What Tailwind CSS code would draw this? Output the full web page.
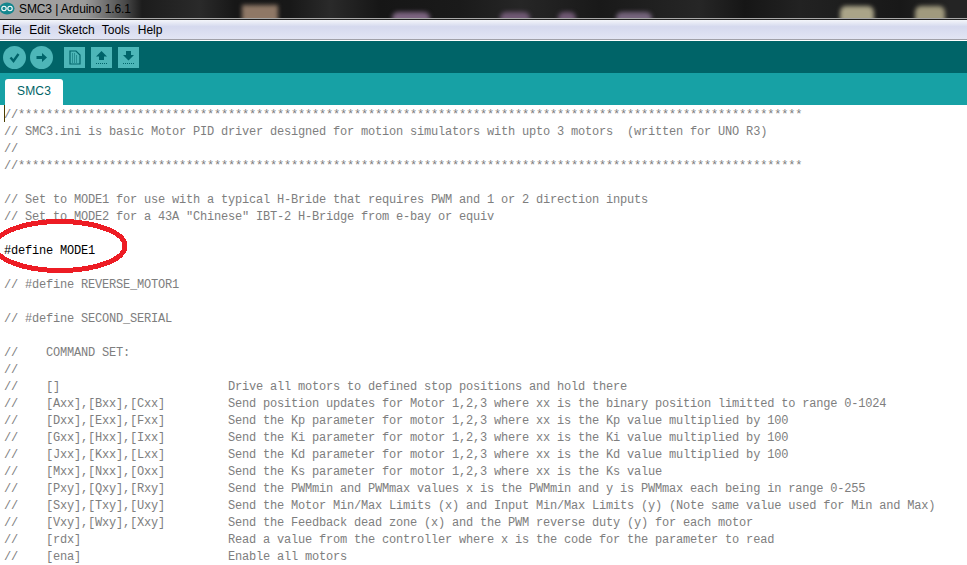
<!DOCTYPE html>
<html>
<head>
<meta charset="utf-8">
<script src="https://cdn.jsdelivr.net/npm/@tailwindcss/browser@4"></script>
</head>
<body class="bg-white overflow-hidden">
<div class="w-[967px] h-[565px] relative overflow-hidden flex flex-col font-['Liberation_Sans',sans-serif]">
  <div class="h-[18px] relative bg-[linear-gradient(90deg,#a8a8a8_0,#9a9a9a_85px,#4a4a4a_125px,#1c1c1c_142px,#2a2a2a_200px,#171717_235px,#181818_290px,#2a2a2a_330px,#161616_380px,#1a1a1a_460px,#262626_520px,#191919_600px,#262626_700px,#161616_745px,#222222_800px,#181818_900px,#242424_950px)] flex items-center shrink-0 overflow-hidden">
    <span class="absolute left-[242px] top-[5px] w-[36px] h-[18px] bg-[#8f7866] blur-[2px]"></span>
    <span class="absolute left-[392px] top-[12px] w-[38px] h-[12px] rounded-full bg-[#7c6480] blur-[2px]"></span>
    <span class="absolute left-[500px] top-[12px] w-[30px] h-[12px] rounded-full bg-[#6f5873] blur-[2px]"></span>
    <span class="absolute left-[558px] top-[12px] w-[18px] h-[12px] rounded-full bg-[#6f5873] blur-[2px]"></span>
    <span class="absolute left-[616px] top-[12px] w-[36px] h-[12px] rounded-full bg-[#75647c] blur-[2px]"></span>
    <span class="absolute left-[840px] top-[6px] w-[34px] h-[16px] rounded-t-md bg-[#aaa488] blur-[2px]"></span>
    <span class="absolute left-[915px] top-[6px] w-[30px] h-[16px] rounded-t-md bg-[#a09a7e] blur-[2px]"></span>
    <svg class="relative w-[15px] h-[13px] shrink-0 -mt-[1px]" viewBox="0 0 15 13"><ellipse cx="7" cy="6.5" rx="7.5" ry="6" fill="#14868e"/><circle cx="4" cy="6.5" r="2.2" fill="none" stroke="#fff" stroke-width="1.1"/><circle cx="10" cy="6.5" r="2.2" fill="none" stroke="#fff" stroke-width="1.1"/></svg>
    <span class="relative ml-[4px] text-[12px] tracking-[-0.1px] leading-[18px] text-black">SMC3 | Arduino 1.6.1</span>
  </div>
  <div class="h-px bg-[#a8a8a8] shrink-0"></div>
  <div class="h-px bg-[#222222] shrink-0"></div>
  <div class="h-5 shrink-0 flex items-center gap-[8px] pl-[2px] text-[12px] text-black bg-gradient-to-b from-[#f4f6fa] via-[#d5d9ee] via-[35%] to-[#e2e5f4] border-b border-[#a0a0a8]">
    <span>File</span><span>Edit</span><span>Sketch</span><span class="-ml-[1px]">Tools</span><span>Help</span>
  </div>
  <div class="h-px bg-white shrink-0"></div>
  <div class="h-[32px] shrink-0 bg-[#006468] flex items-center pl-[3px]">
    <span class="w-[23px] h-[23px] rounded-full bg-[#4db6b8] flex items-center justify-center">
      <svg class="w-[13px] h-[13px]" viewBox="0 0 13 13"><path d="M2.5 6.5 L5.5 10 L10.5 3" fill="none" stroke="#00646a" stroke-width="2.4"/></svg>
    </span>
    <span class="ml-[4px] w-[23px] h-[23px] rounded-full bg-[#4db6b8] flex items-center justify-center">
      <svg class="w-[13px] h-[13px]" viewBox="0 0 13 13"><path d="M1.5 5H7V2L12 6.5L7 11V8H1.5Z" fill="#00646a"/></svg>
    </span>
    <span class="ml-[11px] w-[21px] h-[21px] bg-[#4db6b8] flex items-center justify-center">
      <svg class="w-[13px] h-[15px]" viewBox="0 0 13 15"><path d="M2 1H8L12 5V14H2Z" fill="none" stroke="#00646a" stroke-width="1.2"/><path d="M4 6H10M4 8H10M4 10H10M4 12H10M4 4H7" stroke="#00646a" stroke-width="1" stroke-dasharray="1 1"/></svg>
    </span>
    <span class="ml-[6px] w-[21px] h-[21px] bg-[#4db6b8] flex items-center justify-center">
      <svg class="w-[15px] h-[15px]" viewBox="0 0 15 15"><path d="M7.5 1L13 6.5H10V10H5V6.5H2Z" fill="#00646a"/><path d="M2 13.5H13" stroke="#00646a" stroke-dasharray="1 1"/></svg>
    </span>
    <span class="ml-[6px] w-[21px] h-[21px] bg-[#4db6b8] flex items-center justify-center">
      <svg class="w-[15px] h-[15px]" viewBox="0 0 15 15"><path d="M5 1H10V5H13L7.5 10.5L2 5H5Z" fill="#00646a"/><path d="M2 13.5H13" stroke="#00646a" stroke-dasharray="1 1"/></svg>
    </span>
  </div>
  <div class="h-[32px] shrink-0 bg-[#17a1a5] flex items-end pl-[5px]">
    <div class="w-[58px] h-[26px] bg-white rounded-t-[3px] text-[12px] tracking-[0.2px] text-[#006468] text-center leading-[25px]">SMC3</div>
  </div>
  <div class="grow relative flex flex-col pl-[4px] pt-[2px] font-['Liberation_Mono',monospace] text-[12px] tracking-[-0.2px] leading-[17px] text-[#7e7e7e] whitespace-pre">
    <div class="absolute left-[4px] top-0 w-px h-[17px] bg-[#4a3d00]"></div>
    <div>//****************************************************************************************************************</div>
    <div>// SMC3.ini is basic Motor PID driver designed for motion simulators with upto 3 motors  (written for UNO R3)</div>
    <div>//</div>
    <div>//****************************************************************************************************************</div>
    <div> </div>
    <div>// Set to MODE1 for use with a typical H-Bride that requires PWM and 1 or 2 direction inputs</div>
    <div>// Set to MODE2 for a 43A "Chinese" IBT-2 H-Bridge from e-bay or equiv</div>
    <div> </div>
    <div class="text-black">#define MODE1</div>
    <div> </div>
    <div>// #define REVERSE_MOTOR1</div>
    <div> </div>
    <div>// #define SECOND_SERIAL</div>
    <div> </div>
    <div>//    COMMAND SET:</div>
    <div>//</div>
    <div>//    []                        Drive all motors to defined stop positions and hold there</div>
    <div>//    [Axx],[Bxx],[Cxx]         Send position updates for Motor 1,2,3 where xx is the binary position limitted to range 0-1024</div>
    <div>//    [Dxx],[Exx],[Fxx]         Send the Kp parameter for motor 1,2,3 where xx is the Kp value multiplied by 100</div>
    <div>//    [Gxx],[Hxx],[Ixx]         Send the Ki parameter for motor 1,2,3 where xx is the Ki value multiplied by 100</div>
    <div>//    [Jxx],[Kxx],[Lxx]         Send the Kd parameter for motor 1,2,3 where xx is the Kd value multiplied by 100</div>
    <div>//    [Mxx],[Nxx],[Oxx]         Send the Ks parameter for motor 1,2,3 where xx is the Ks value</div>
    <div>//    [Pxy],[Qxy],[Rxy]         Send the PWMmin and PWMmax values x is the PWMmin and y is PWMmax each being in range 0-255</div>
    <div>//    [Sxy],[Txy],[Uxy]         Send the Motor Min/Max Limits (x) and Input Min/Max Limits (y) (Note same value used for Min and Max)</div>
    <div>//    [Vxy],[Wxy],[Xxy]         Send the Feedback dead zone (x) and the PWM reverse duty (y) for each motor</div>
    <div>//    [rdx]                     Read a value from the controller where x is the code for the parameter to read</div>
    <div>//    [ena]                     Enable all motors</div>
  </div>
  <svg class="absolute left-0 top-[218px] w-[130px] h-[56px]" viewBox="0 0 130 56" shape-rendering="crispEdges"><ellipse cx="60" cy="28" rx="65" ry="24.5" fill="none" stroke="#ed1c24" stroke-width="5"/></svg>
</div>
</body>
</html>
